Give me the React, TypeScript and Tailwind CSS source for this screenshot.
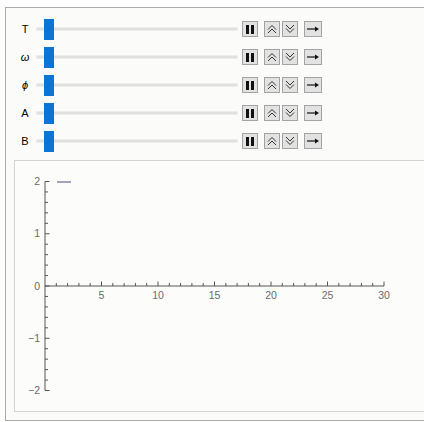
import React from "react";

const rows = [
    { label: "T", italic: false },
    { label: "ω", italic: true },
    { label: "ϕ", italic: true },
    { label: "A", italic: false },
    { label: "B", italic: false },
];

function Btn({ w, children }: { w: string; children: React.ReactNode }) {
    return (
        <div className={`${w} h-[16px] border border-[#a3a3a3] bg-[#e2e2e2] flex items-center justify-center`}>
            {children}
        </div>
    );
}

function ControlRow({ label, italic }: { label: string; italic: boolean }) {
    return (
        <div className="h-[28px] flex items-center">
            <div className={`w-[22px] text-center text-[11px] text-black ${italic ? "italic" : ""}`}>{label}</div>
            <div className="relative w-[202px] h-[28px] flex items-center">
                <div className="w-full h-[4px] bg-[#e0e0e0] border border-[#ececec] rounded-[1px]" />
                <div className="absolute left-[8px] top-[4px] w-[10px] h-[21px] bg-[#0b74d7]" />
            </div>
            <div className="flex items-center ml-[4px]">
                <Btn w="w-[16px]">
                    <svg width="10" height="11" viewBox="0 0 10 11">
                        <rect x="1" y="1" width="3" height="9" fill="#111" />
                        <rect x="6" y="1" width="3" height="9" fill="#111" />
                    </svg>
                </Btn>
                <div className="ml-[6px]">
                    <Btn w="w-[16px]">
                        <svg width="12" height="12" viewBox="0 0 12 12" fill="none" stroke="#333" strokeWidth="1">
                            <path d="M2 6.5 L6 2.5 L10 6.5" />
                            <path d="M2 10 L6 6 L10 10" />
                        </svg>
                    </Btn>
                </div>
                <div className="ml-[2px]">
                    <Btn w="w-[16px]">
                        <svg width="12" height="12" viewBox="0 0 12 12" fill="none" stroke="#333" strokeWidth="1">
                            <path d="M2 2 L6 6 L10 2" />
                            <path d="M2 5.5 L6 9.5 L10 5.5" />
                        </svg>
                    </Btn>
                </div>
                <div className="ml-[6px]">
                    <Btn w="w-[18px]">
                        <svg width="14" height="10" viewBox="0 0 14 10">
                            <line x1="1" y1="5" x2="11" y2="5" stroke="#111" strokeWidth="1.2" />
                            <path d="M9 2.5 L13 5 L9 7.5 Z" fill="#111" />
                        </svg>
                    </Btn>
                </div>
            </div>
        </div>
    );
}

function Plot() {
    const y0 = 286;
    const yu = 52.25;
    const x0 = 45;
    const xu = 11.3;
    const yTicks: React.ReactNode[] = [];
    for (let i = -10; i <= 10; i++) {
        const y = y0 - (i / 5) * yu;
        const major = i % 5 === 0;
        yTicks.push(<line key={"y" + i} x1={x0} x2={x0 + (major ? 4.5 : 3)} y1={y} y2={y} stroke="#555" strokeWidth="1" />);
    }
    const xTicks: React.ReactNode[] = [];
    for (let i = 1; i <= 30; i++) {
        const x = x0 + i * xu;
        const major = i % 5 === 0;
        xTicks.push(<line key={"x" + i} x1={x} x2={x} y1={y0} y2={y0 - (major ? 4.5 : 3)} stroke="#555" strokeWidth="1" />);
    }
    const fnt = { fontFamily: "'Liberation Sans', Arial, sans-serif", fontSize: 10.5, fill: "#6a6a6a" };
    return (
        <svg width="408" height="250" viewBox="15 161 408 250">
            <line x1={x0} x2={x0} y1={y0 - 2 * yu} y2={y0 + 2 * yu} stroke="#555" strokeWidth="1" />
            <line x1={x0} x2={x0 + 30 * xu} y1={y0} y2={y0} stroke="#555" strokeWidth="1" />
            {yTicks}
            {xTicks}
            {[2, 1, 0].map((v) => (
                <text key={v} x={40} y={y0 - v * yu + 3.5} textAnchor="end" {...fnt}>{v}</text>
            ))}
            {[-1, -2].map((v) => (
                <text key={v} x={40} y={y0 - v * yu + 3.5} textAnchor="end" {...fnt}>{"−" + Math.abs(v)}</text>
            ))}
            {[5, 10, 15, 20, 25, 30].map((v) => (
                <text key={v} x={x0 + v * xu} y={299} textAnchor="middle" {...fnt}>{v}</text>
            ))}
            <line x1="57" x2="71" y1="182" y2="182" stroke="#8585a8" strokeWidth="1.5" />
        </svg>
    );
}

export default function App() {
    return (
        <div className="w-[424px] h-[422px] overflow-hidden bg-white pt-[7px] pl-[5px]" style={{ fontFamily: "'Liberation Sans', Arial, sans-serif" }}>
            <div className="w-[430px] h-[414px] border border-[#ababab] bg-[#fbfcfa] pt-[7px] pl-[8px]">
                {rows.map((r) => (
                    <ControlRow key={r.label} label={r.label} italic={r.italic} />
                ))}
                <div className="mt-[5px] w-[420px] h-[252px] border border-[#d4d4d4] bg-[#fcfdfb]">
                    <Plot />
                </div>
            </div>
        </div>
    );
}
